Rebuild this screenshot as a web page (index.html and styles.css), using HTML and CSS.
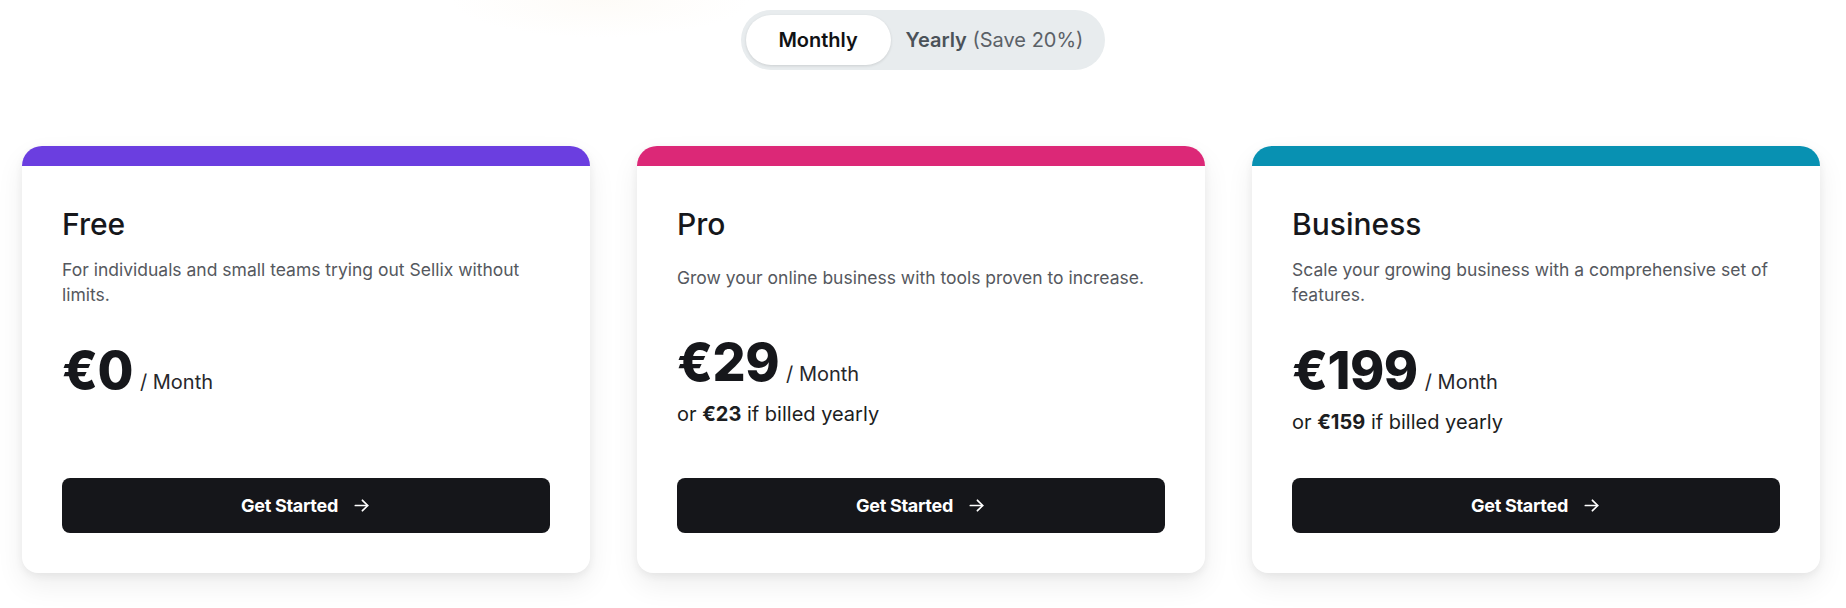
FILE: index.html
```html
<!DOCTYPE html>
<html lang="en">
<head>
<meta charset="utf-8">
<title>Pricing</title>
<link rel="stylesheet" href="styles.css">
</head>
<body>
<main class="page">
  <div class="toggle-wrap">
    <div class="toggle">
      <button class="toggle-btn active">Monthly</button>
      <button class="toggle-btn yearly"><strong>Yearly</strong> <span class="save">(Save 20%)</span></button>
    </div>
  </div>

  <section class="plans">
    <article class="card">
      <div class="bar bar-free"></div>
      <div class="card-body">
        <h2 class="plan-name">Free</h2>
        <p class="plan-desc">For individuals and small teams trying out Sellix without limits.</p>
        <div class="price"><span class="amount">€0</span><span class="per">/ Month</span></div>
        <a class="cta" href="#">Get Started
          <svg class="arrow" viewBox="0 0 20 20" width="19" height="19" fill="none" stroke="currentColor" stroke-width="1.8" stroke-linecap="round" stroke-linejoin="round"><path d="M3.5 10h13"/><path d="M11 4.5 16.5 10 11 15.5"/></svg>
        </a>
      </div>
    </article>

    <article class="card">
      <div class="bar bar-pro"></div>
      <div class="card-body">
        <h2 class="plan-name">Pro</h2>
        <p class="plan-desc single">Grow your online business with tools proven to increase.</p>
        <div class="price price-pro"><span class="amount">€29</span><span class="per">/ Month</span></div>
        <p class="yearly-note">or <b>€23</b> if billed yearly</p>
        <a class="cta" href="#">Get Started
          <svg class="arrow" viewBox="0 0 20 20" width="19" height="19" fill="none" stroke="currentColor" stroke-width="1.8" stroke-linecap="round" stroke-linejoin="round"><path d="M3.5 10h13"/><path d="M11 4.5 16.5 10 11 15.5"/></svg>
        </a>
      </div>
    </article>

    <article class="card">
      <div class="bar bar-business"></div>
      <div class="card-body">
        <h2 class="plan-name">Business</h2>
        <p class="plan-desc">Scale your growing business with a comprehensive set of features.</p>
        <div class="price"><span class="amount">€199</span><span class="per">/ Month</span></div>
        <p class="yearly-note">or <b>€159</b> if billed yearly</p>
        <a class="cta" href="#">Get Started
          <svg class="arrow" viewBox="0 0 20 20" width="19" height="19" fill="none" stroke="currentColor" stroke-width="1.8" stroke-linecap="round" stroke-linejoin="round"><path d="M3.5 10h13"/><path d="M11 4.5 16.5 10 11 15.5"/></svg>
        </a>
      </div>
    </article>
  </section>
</main>
</body>
</html>
```

FILE: styles.css
```css
* { box-sizing: border-box; }

html, body {
  margin: 0;
  padding: 0;
  background: #ffffff;
}

body {
  font-family: Inter, "Noto Sans", "Liberation Sans", sans-serif;
  color: #16171b;
  width: 1846px;
  height: 608px;
  overflow: hidden;
}

.page {
  padding-top: 10px;
  background: radial-gradient(ellipse 200px 50px at 600px 0px, rgba(250, 242, 230, 0.3), rgba(255,255,255,0) 75%);
}

.toggle-wrap {
  display: flex;
  justify-content: center;
}

.toggle {
  display: flex;
  align-items: center;
  padding: 5px;
  background: #e8ecee;
  border-radius: 30px;
  height: 60px;
}

.toggle-btn {
  height: 50px;
  border: none;
  background: transparent;
  font-family: inherit;
  font-size: 20px;
  line-height: 50px;
  border-radius: 25px;
  cursor: pointer;
  padding: 0;
}

.toggle-btn.active {
  width: 145px;
  text-align: center;
  background: #ffffff;
  color: #111214;
  font-weight: 600;
  box-shadow: 0 1px 3px rgba(0, 0, 0, 0.12);
}

.toggle-btn.yearly {
  padding: 0 17px 0 15px;
  color: #4b5259;
  white-space: nowrap;
}

.toggle-btn.yearly strong {
  font-weight: 600;
}

.save {
  color: #5b6167;
  font-weight: 400;
}

.plans {
  display: grid;
  grid-template-columns: repeat(3, 568px);
  column-gap: 47px;
  padding: 0 26px 0 22px;
  margin-top: 76px;
}

.card {
  display: flex;
  flex-direction: column;
  background: #ffffff;
  border-radius: 20px 20px 16px 16px;
  overflow: hidden;
  box-shadow: 0 12px 28px rgba(0, 0, 0, 0.07), 0 3px 8px rgba(0, 0, 0, 0.06);
  min-height: 427px;
}

.bar {
  height: 20px;
  flex: none;
}

.bar-free { background: #6b3ee0; }
.bar-pro { background: #dc2877; }
.bar-business { background: #0891b2; }

.card-body {
  flex: 1;
  display: flex;
  flex-direction: column;
  padding: 40px 40px 40px 40px;
}

.plan-name {
  margin: 0;
  font-size: 30px;
  line-height: 36px;
  font-weight: 500;
  color: #16171b;
}

.plan-desc {
  margin: 15px 0 0 0;
  font-size: 17.5px;
  line-height: 25px;
  color: #55585e;
}

.plan-desc.single {
  margin-top: 23px;
}

.price {
  margin-top: 38px;
  display: flex;
  align-items: baseline;
  line-height: 51px;
}

.price-pro {
  margin-top: 47px;
}

.amount {
  font-size: 52px;
  font-weight: 800;
  letter-spacing: -0.5px;
  color: #16171b;
}

.per {
  margin-left: 7px;
  font-size: 20px;
  color: #27282c;
}

.yearly-note {
  margin: 0;
  font-size: 20px;
  line-height: 28px;
  color: #1c1d21;
}

.yearly-note b {
  font-weight: 700;
}

.cta {
  margin-top: auto;
  height: 55px;
  border-radius: 8px;
  background: #15161a;
  color: #ffffff;
  text-decoration: none;
  display: flex;
  align-items: center;
  justify-content: center;
  gap: 14px;
  font-size: 18px;
  font-weight: 700;
  letter-spacing: -0.3px;
}

.arrow {
  display: block;
}
```
